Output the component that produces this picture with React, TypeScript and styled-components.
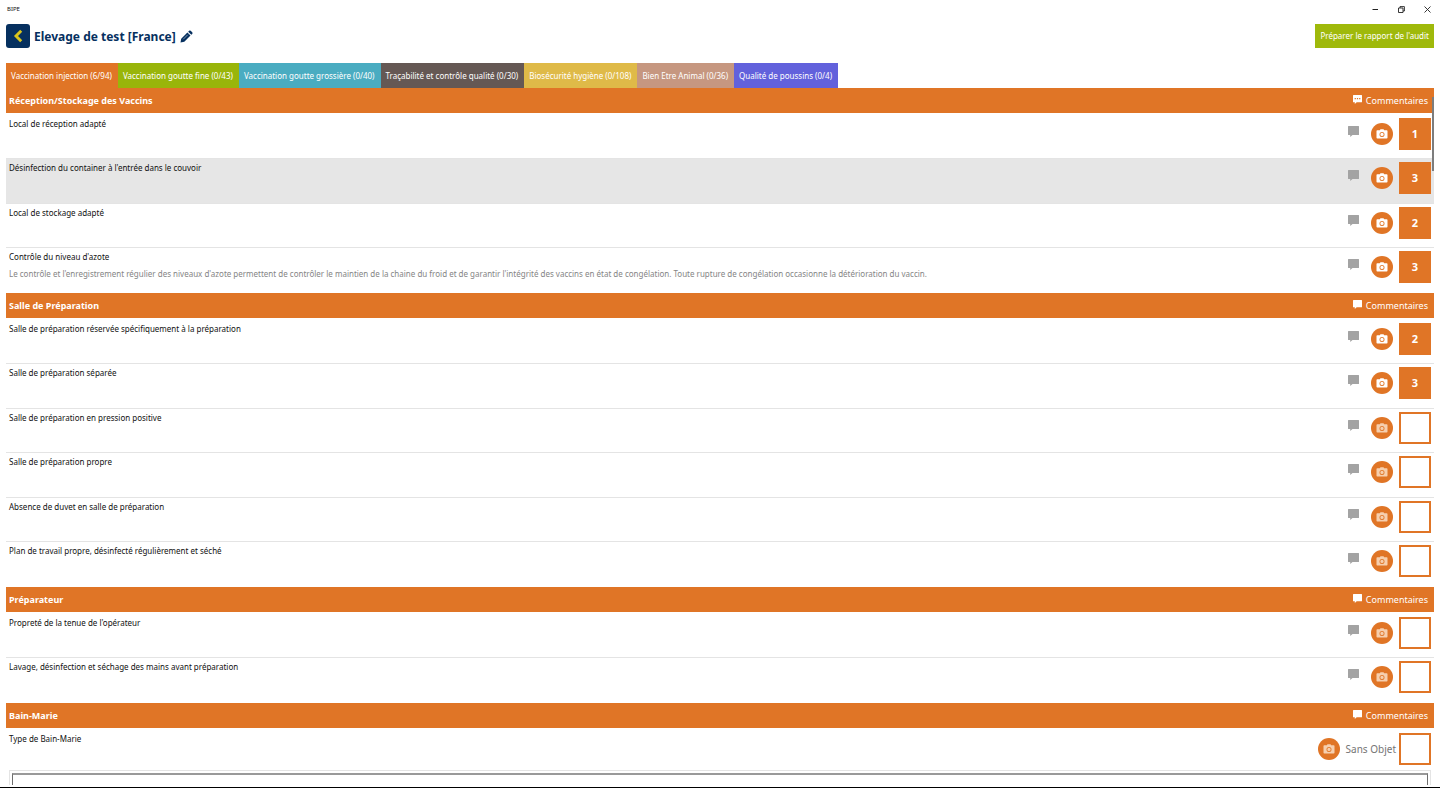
import React, { useState } from "react";
import styled, { createGlobalStyle, css } from "styled-components";

const ORANGE = "#e07526";
const NAVY = "#06305f";
const LIME = "#9fb90b";

const GlobalStyle = createGlobalStyle`
  * { box-sizing: border-box; }
  body { margin: 0; background: #fff; }
  body, button, textarea {
    font-family: "Segoe UI", "Noto Sans", "Open Sans", sans-serif;
    font-size: 8px;
    line-height: 12px;
  }
  button { margin: 0; padding: 0; border: 0; background: none; cursor: pointer; }
  svg { display: block; flex: none; }
`;

const Window = styled.div`
  display: flex;
  flex-direction: column;
  height: 100vh;
  overflow: hidden;
  color: #111;
  border-bottom: 1px solid #000;
`;

const TitleBar = styled.header`
  display: flex;
  align-items: center;
  justify-content: space-between;
  flex: none;
  height: 18px;
  padding-left: 7px;
  font-size: 6px;
`;

const WindowControls = styled.div`
  display: flex;
`;

const WindowButton = styled.button`
  display: grid;
  place-items: center;
  width: 26px;
  height: 18px;
  color: #222;
`;

const Toolbar = styled.div`
  display: flex;
  align-items: center;
  flex: none;
  gap: 4px;
  padding: 6px 6px 15px;
`;

const BackButton = styled.button`
  display: grid;
  place-items: center;
  width: 24px;
  height: 24px;
  border-radius: 3px;
  background: ${NAVY};
`;

const PageTitle = styled.h1`
  margin: 0;
  padding-top: 1px;
  font-size: 12px;
  line-height: 16px;
  font-weight: 700;
  color: ${NAVY};
`;

const EditButton = styled.button`
  color: ${NAVY};
`;

const ReportButton = styled.button`
  height: 24px;
  margin-left: auto;
  padding: 0 5px;
  background: ${LIME};
  color: #fff;
`;

const Tabs = styled.nav`
  display: flex;
  flex: none;
  padding: 0 6px;
`;

const Tab = styled.button<{ $color: string }>`
  height: 25px;
  padding: 0 6px 0 5px;
  background: ${(p) => p.$color};
  color: #fff;
  white-space: nowrap;
`;

const ScrollFrame = styled.main`
  position: relative;
  flex: 1;
  min-height: 0;
  margin: 0 6px 2px;
  overflow: hidden;
`;

const ScrollThumb = styled.div`
  position: absolute;
  top: 9px;
  right: 0;
  width: 2px;
  height: 74px;
  background: #7d7d7d;
`;

const SectionHeader = styled.div`
  display: flex;
  align-items: center;
  justify-content: space-between;
  height: 25px;
  margin-bottom: 2px;
  padding: 0 6px 0 3px;
  background: ${ORANGE};
  color: #fff;
`;

const SectionTitle = styled.h2`
  margin: 0;
  font-size: 9px;
  line-height: 12px;
  font-weight: 700;
`;

const SectionComments = styled.button`
  display: flex;
  align-items: flex-start;
  gap: 4px;
  font-size: 9px;
  color: #fff;
`;

const List = styled.ul`
  margin: 0;
  padding: 0;
  list-style: none;
`;

const Row = styled.li<{ $hovered?: boolean }>`
  display: flex;
  justify-content: space-between;
  height: 44px;
  padding: 3px;
  border-bottom: 1px solid #e4e4e4;
  ${(p) => p.$hovered && css`background: #e6e6e6;`}

  &:nth-child(even) { height: 45px; }
  &:last-child { border-bottom-color: transparent; }
`;

const RowText = styled.div`
  display: flex;
  flex-direction: column;
  gap: 5px;
`;

const Label = styled.span``;

const Description = styled.span`
  color: #858585;
`;

const Actions = styled.div`
  display: flex;
  align-items: center;
  height: 32px;
`;

const CommentButton = styled.button`
  align-self: flex-start;
  margin: 8px 12px 0 0;
  color: #a3a3a3;
`;

const CameraButton = styled.button<{ $empty: boolean }>`
  display: grid;
  place-items: center;
  width: 22px;
  height: 22px;
  margin-right: 6px;
  border-radius: 50%;
  background: ${ORANGE};
  color: ${(p) => (p.$empty ? "#f6cfae" : "#fff")};
`;

const NotApplicable = styled.span`
  margin-right: 3px;
  font-size: 10px;
  color: #757575;
`;

const Score = styled.button<{ $filled: boolean }>`
  width: 32px;
  height: 32px;
  border: 2px solid ${ORANGE};
  background: ${(p) => (p.$filled ? ORANGE : "#fff")};
  color: #fff;
  font-size: 11px;
  font-weight: 700;
`;

const FieldFrame = styled.div`
  margin: -4px 3px 0;
  padding: 2px;
  border: 1px solid #e4e4e4;
`;

const Field = styled.textarea`
  display: block;
  width: 100%;
  height: 32px;
  padding: 4px;
  border: 1px solid #6e6e6e;
  border-top-width: 2px;
  border-top-color: #999;
  border-radius: 0;
  background: #fff;
  resize: none;
`;

const ChevronIcon = () => (
  <svg width="10" height="14" viewBox="0 0 10 14" fill="none" stroke="#d9c51c" strokeWidth="2.9">
    <path d="M8.200 1.700 3 7l5.200 5.300" />
  </svg>
);

const PencilIcon = () => (
  <svg width="13" height="13" viewBox="0 0 13 13" fill="currentColor">
    <path d="M.5 12.500 1.200 8.700 7.400 2.500l3.100 3.100L4.300 11.800zM8.200 1.700l.9-.9q.8-.8 1.600 0l1.500 1.500q.8.8 0 1.600l-.9.9z" />
    <path d="M3.200 9.300 7.800 4.700" stroke="#fff" strokeWidth=".5" />
  </svg>
);

const CommentIcon = ({ dots = false, size = 11 }: { dots?: boolean; size?: number }) => (
  <svg width={size} height={size} viewBox="0 0 11 11" fill="currentColor">
    <path d="M.5 0h10q.5 0 .5.5v8q0 .5-.5.5H4.500L2.200 11V9H.5Q0 9 0 8.500V.5Q0 0 .5 0z" />
    {dots && <path d="M2 3.800h1.500v1.500H2zM4.750 3.800h1.500v1.500h-1.500zM7.500 3.800H9v1.500H7.500z" fill={ORANGE} />}
  </svg>
);

const CameraIcon = () => (
  <svg width="12" height="10" viewBox="0 0 12 10" fill="currentColor">
    <path
      fillRule="evenodd"
      d="M3.800 1.300 4.500.2h3l.7 1.100H10.700q.8 0 .8.8v6.700q0 .8-.8.8H1.300q-.8 0-.8-.8V2.100q0-.8.8-.8zM6 2.900a2.500 2.500 0 1 0 0 5 2.500 2.500 0 0 0 0-5zm0 .8a1.700 1.700 0 1 1 0 3.400 1.700 1.700 0 0 1 0-3.400z"
    />
  </svg>
);

const MinimizeIcon = () => (
  <svg width="7" height="7" viewBox="0 0 7 7" stroke="currentColor"><path d="M.5 3.500h5.500" /></svg>
);

const RestoreIcon = () => (
  <svg width="7" height="7" viewBox="0 0 7 7" fill="none" stroke="currentColor" strokeWidth=".9">
    <path d="M.5 2h4.500v4.500H.5zM2 2V.6h4.400V5H5" />
  </svg>
);

const CloseIcon = () => (
  <svg width="7" height="7" viewBox="0 0 7 7" stroke="currentColor" strokeWidth=".9">
    <path d="m.5.5 6 6m0-6-6 6" />
  </svg>
);

interface Item {
  label: string;
  description?: string;
  score?: number;
  hovered?: boolean;
  freeText?: boolean;
}

interface Section {
  title: string;
  commented?: boolean;
  items: Item[];
}

const TABS = [
  { label: "Vaccination injection (6/94)", color: ORANGE },
  { label: "Vaccination goutte fine (0/43)", color: "#99b50a" },
  { label: "Vaccination goutte grossière (0/40)", color: "#4aacc1" },
  { label: "Traçabilité et contrôle qualité (0/30)", color: "#655854" },
  { label: "Biosécurité hygiène (0/108)", color: "#dfba48" },
  { label: "Bien Etre Animal (0/36)", color: "#c69780" },
  { label: "Qualité de poussins (0/4)", color: "#6261dc" },
];

const SECTIONS: Section[] = [
  {
    title: "Réception/Stockage des Vaccins",
    commented: true,
    items: [
      { label: "Local de réception adapté", score: 1 },
      { label: "Désinfection du container à l'entrée dans le couvoir", score: 3, hovered: true },
      { label: "Local de stockage adapté", score: 2 },
      {
        label: "Contrôle du niveau d'azote",
        description:
          "Le contrôle et l'enregistrement régulier des niveaux d'azote permettent de contrôler le maintien de la chaine du froid et de garantir l'intégrité des vaccins en état de congélation. Toute rupture de congélation occasionne la détérioration du vaccin.",
        score: 3,
      },
    ],
  },
  {
    title: "Salle de Préparation",
    items: [
      { label: "Salle de préparation réservée spécifiquement à la préparation", score: 2 },
      { label: "Salle de préparation séparée", score: 3 },
      { label: "Salle de préparation en pression positive" },
      { label: "Salle de préparation propre" },
      { label: "Absence de duvet en salle de préparation" },
      { label: "Plan de travail propre, désinfecté régulièrement et séché" },
    ],
  },
  {
    title: "Préparateur",
    items: [
      { label: "Propreté de la tenue de l'opérateur" },
      { label: "Lavage, désinfection et séchage des mains avant préparation" },
    ],
  },
  { title: "Bain-Marie", items: [{ label: "Type de Bain-Marie", freeText: true }] },
];

const AuditRow = ({ item }: { item: Item }) => {
  const filled = item.score !== undefined;
  return (
    <Row $hovered={item.hovered}>
      <RowText>
        <Label>{item.label}</Label>
        {item.description && <Description>{item.description}</Description>}
      </RowText>
      <Actions>
        {!item.freeText && (
          <CommentButton aria-label={`Commenter : ${item.label}`}>
            <CommentIcon />
          </CommentButton>
        )}
        <CameraButton $empty={!filled} aria-label={`Photo : ${item.label}`}>
          <CameraIcon />
        </CameraButton>
        {item.freeText && <NotApplicable>Sans Objet</NotApplicable>}
        <Score $filled={filled} aria-label={`Note : ${item.label}`}>
          {item.score}
        </Score>
      </Actions>
    </Row>
  );
};

export default function App() {
  const [answer, setAnswer] = useState("");
  return (
    <Window>
      <GlobalStyle />
      <TitleBar>
        <span>BIPE</span>
        <WindowControls>
          <WindowButton aria-label="Réduire"><MinimizeIcon /></WindowButton>
          <WindowButton aria-label="Restaurer"><RestoreIcon /></WindowButton>
          <WindowButton aria-label="Fermer"><CloseIcon /></WindowButton>
        </WindowControls>
      </TitleBar>
      <Toolbar>
        <BackButton aria-label="Retour"><ChevronIcon /></BackButton>
        <PageTitle>Elevage de test [France]</PageTitle>
        <EditButton aria-label="Modifier"><PencilIcon /></EditButton>
        <ReportButton>Préparer le rapport de l'audit</ReportButton>
      </Toolbar>
      <Tabs>
        {TABS.map((tab) => (
          <Tab key={tab.label} $color={tab.color}>{tab.label}</Tab>
        ))}
      </Tabs>
      <ScrollFrame>
        {SECTIONS.map((section) => (
          <section key={section.title}>
            <SectionHeader>
              <SectionTitle>{section.title}</SectionTitle>
              <SectionComments>
                <CommentIcon dots={section.commented} size={9} />
                Commentaires
              </SectionComments>
            </SectionHeader>
            <List>
              {section.items.map((item) => (
                <AuditRow key={item.label} item={item} />
              ))}
            </List>
          </section>
        ))}
        <FieldFrame>
          <Field aria-label="Type de Bain-Marie" value={answer} onChange={(e) => setAnswer(e.target.value)} />
        </FieldFrame>
        <ScrollThumb />
      </ScrollFrame>
    </Window>
  );
}
